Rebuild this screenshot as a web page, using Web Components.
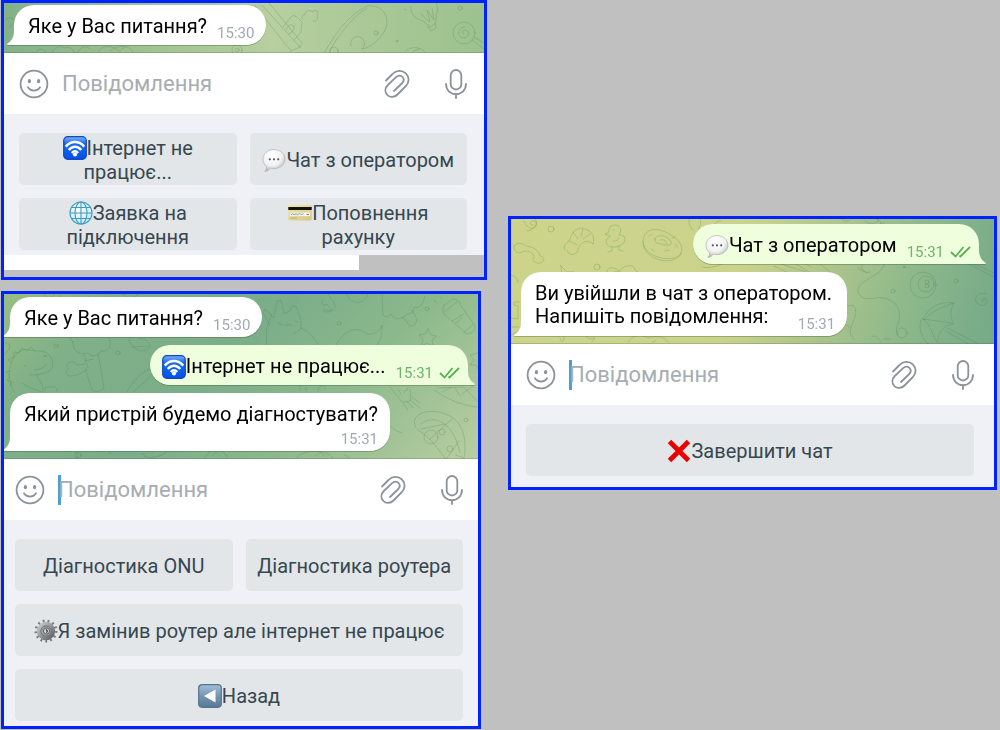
<!DOCTYPE html>
<html lang="uk">
<head>
<meta charset="utf-8">
<meta name="viewport" content="width=device-width, initial-scale=1">
<title>Чат-бот</title>
<style>
  * { box-sizing: border-box; }
  body {
    margin: 0;
    background: #c0c0c0;
    font-family: Roboto, "Noto Sans", sans-serif;
  }
  main {
    display: grid;
    grid-template-columns: 486fr 489fr;
    gap: 21px;
    align-items: start;
    padding: 0 3px 0 1px;
  }
  .column { display: flex; flex-direction: column; gap: 11px; }
  .operator { padding-top: 216px; }
  #questions { --inset-left: 15px; --inset-right: 17px; }
  #diagnostics { --inset-left: 11px; --inset-right: 15px; margin-right: 6px; }
  #chat { --inset-left: 15px; --inset-right: 20px; }
  #questions chat-wall {
    --wall: linear-gradient(90deg, #83b188 0%, #9fc190 28%, #b8cf9f 56%, #a9c896 76%, #9cc28e 100%);
    --wall-top: 2px;
  }
  #diagnostics chat-wall {
    --wall: linear-gradient(135deg, #9abe84 0%, #80b088 18%, #7bad89 45%, #8cb98c 68%, #b9cea2 100%);
    --wall-top: 3px;
  }
  #chat chat-wall {
    --wall: linear-gradient(105deg, #cdd48a 0%, #cbd38b 46%, #b2c68c 62%, #8fb98b 80%, #74a988 100%);
    --wall-top: 5px;
  }
  #questions reply-keyboard { --keys-bottom: 5px; }
  #diagnostics reply-keyboard { --keys-bottom: 5px; }
  #chat reply-keyboard { --keys-bottom: 11px; }
  .leftover { height: 22px; }
  .leftover div { width: 74%; height: 15px; background: #fff; }
</style>
</head>
<body>
<main>
  <div class="column">
    <chat-panel id="questions">
      <chat-wall>
        <svg slot="doodles" viewBox="4 3 480 50" preserveAspectRatio="xMinYMin slice" aria-hidden="true">
          <path d="M6 19c4-3 9-1 8 3-1 3-4 2-4 5"/>
          <path d="M36 52c2-4 8-4 10 0M52 53c2-6 8-8 13-5 4-2 9 1 9 5M78 52c3-6 8-7 12-3M98 52c4-7 12-6 17-4 8-3 14-2 18 4M110 51l4-3 5 3 6-4"/>
          <circle cx="237" cy="50" r="5"/><circle cx="237" cy="50" r="2"/>
          <path d="M262 5l38 42M255 6l36 45M300 47l2-4-33-40M291 51l9-4M283 27l8-10q2-3 6 0l5 5-1 10-7 8M302 19c-1-3 2-5 3-4 0-5 5-6 7-3 4-4 8 0 5 4 2 4-2 6-4 5M286 30q3-8 8-4 1 5-5 8"/>
          <path d="M325 52c10-19 26-40 45-47M329 52c9-16 21-33 38-44M370 6c16-1 22 17 12 29-6 8-13 13-20 14M351 46a7 7 0 1 1 11 3"/>
          <circle cx="376" cy="33" r="2"/><circle cx="397" cy="41" r="1"/><path d="M404 9l2 1M412 22v0"/>
          <path d="M411 6c-1 8 4 13 12 15l7 6 6-4V15c2-4 2-8 0-12M421 14l9 8-3-12 7 10-2-12M428 27l3 4 5-3-1-5"/>
          <circle cx="460" cy="8" r="2"/><circle cx="464" cy="33" r="11"/>
          <path d="M464 34c-2 0-2-4 1-4 5 0 5 7-1 8-7 0-8-11 1-11M474 37l10 6M472 40l12 9"/>
          <path d="M405 52c4-6 15-6 20 0M413 51l6-2"/>
          <circle cx="334" cy="51" r="4"/>
        </svg>
        <chat-bubble time="15:30">Яке у Вас питання?</chat-bubble>
      </chat-wall>
      <message-bar></message-bar>
      <reply-keyboard>
        <reply-key><emoji-icon name="wifi"></emoji-icon>Інтернет не працює...</reply-key>
        <reply-key><emoji-icon name="speech"></emoji-icon>Чат з оператором</reply-key>
        <reply-key><emoji-icon name="globe"></emoji-icon>Заявка на підключення</reply-key>
        <reply-key><emoji-icon name="card"></emoji-icon>Поповнення рахунку</reply-key>
      </reply-keyboard>
      <div class="leftover"><div></div></div>
    </chat-panel>

    <chat-panel id="diagnostics">
      <chat-wall>
        <svg slot="doodles" viewBox="4 294 474 165" preserveAspectRatio="xMinYMin slice" aria-hidden="true">
          <path d="M5 343c5-1 6 4 3 8l-4 4"/>
          <path d="M14 392c-5-9-7-21-2-31 3-8 10-13 17-11l9 1c11-1 17 9 14 17-3 5-13 7-22 7M22 383c7 5 13 7 21 9M43 390c0-9-6-10-6-15M45 391v-4h7q5-1 5 4"/>
          <path d="M12 363l-4-3 6-3 0-5 5 1 3-5 5 3 4-4 4 4M10 371l-4 1 4 4-3 4 5 2-2 4"/>
          <circle cx="45" cy="356" r="1"/><path d="M35 370q7 0 12-6M24 365l2 2"/>
          <circle cx="56" cy="346" r="2"/>
          <path d="M73 342c-7-6-3-13 3-12 2-7 11-6 13-3 8-5 17 1 16 8 9 3 6 18-4 16-2 6-10 6-13 2-8 3-16-2-15-11zM84 354l4 14M85 361l8-2M98 353l6 35q-6 6-12 2l-7-22"/>
          <path d="M85 364l-8 1c-5-7-13-1-9 4-5 5 2 9 6 6 4 1 6-2 13-5"/>
          <circle cx="118" cy="353" r="2"/>
          <path d="M129 340c3-6 10-5 11-1 6-1 10 4 10 8-6 6-15 6-21-7zM132 347l17-1"/>
          <path d="M127 392c7-14 17-21 28-26M133 392l20-18"/>
          <path d="M44 294c2 5 8 5 11 0M60 295c-2 4 4 7 7 4M88 296c4 5 10 6 16 1M121 293l9 6 8-4"/>
          <path d="M270 325l-7-12 2-4 9 9 3-17 4-1 3 14 7-4 1-4h4l5 14 0 9-8 5M272 314l-6 16M266 330c2 12-2 15 4 17M301 328c8 4 15 11 18 19M278 323l4 2M285 326l4-2 3 2M295 321l3 1"/>
          <circle cx="339" cy="323" r="2"/>
          <path d="M323 300c-3 4 1 7 4 4l5 6c-4 2-7-2-9 0 1 4 14 2 12-5-1-5-6-8-8-12M347 294c2 11 18 12 21 0"/>
          <path d="M382 295l1 20q5 4 8-1 4 8 13 3l3-3q7 0 7-7 6 2 9-5l2-6M403 317l7 9q6 0 7-7l-5-9"/>
          <circle cx="427" cy="309" r="2"/><path d="M434 300l3 3M440 297l2 2"/>
          <path d="M444 305l9-6q7 1 8 7l14 20q1 7-8 8l-22-19q-4-4-1-10zM444 312l13-10M452 321l12-7M463 333l11-9M456 323l6-5"/>
          <path d="M428 329l3 6 6 1-5 4 1 6-6-3-6 3 2-6-4-5 6-1z"/>
          <path d="M336 345c8-15 21-20 31-11 7 1 12-2 15-9 1 15-5 23-16 28M478 353l-8 2 4 5-4 5 6 0 2 4"/>
          <path d="M390 387l11 14q8 3 10-2l-1-9M398 389l3 5M404 393l4-5M407 401l6 7M410 400l10 8M403 403l5 7M412 397l8 6"/>
          <path d="M437 388l27-1 13 14M434 390c13 9 26 15 43 17M443 392l8-5M455 388l5 8"/>
          <path d="M416 428c-7-13 10-20 27-15 17 5 25 21 21 45l-8-3M417 429l13 10 16 20M421 424c12-10 32-4 39 29M421 429l24-5M430 439l22-20M447 458l12-17"/>
          <circle cx="431" cy="437" r="7"/><circle cx="442" cy="432" r="3"/><circle cx="450" cy="449" r="3"/><circle cx="466" cy="420" r="2"/>
          <path d="M75 459c4-2 4-7 0-6M110 454q-2-5 4-4M142 453c3 8 21 4 25-2M205 459c1-11 21-11 23 0M212 456c1-4 7-4 8 0M297 458c4-9 30-9 36 0M315 456l5-4 4 4M345 455l4 3M388 422q3 8 14 11"/>
          <circle cx="78" cy="455" r="3"/><path d="M300 390v-5q5-4 10 0M306 391v-3M318 391c0-7 7-6 7-2M462 394l11-8"/>
        </svg>
        <chat-bubble time="15:30">Яке у Вас питання?</chat-bubble>
        <chat-bubble time="15:31" out><emoji-icon name="wifi"></emoji-icon>Інтернет не працює...</chat-bubble>
        <chat-bubble time="15:31" meta="below">Який пристрій будемо діагностувати?</chat-bubble>
      </chat-wall>
      <message-bar focused></message-bar>
      <reply-keyboard>
        <reply-key>Діагностика ONU</reply-key>
        <reply-key>Діагностика роутера</reply-key>
        <reply-key wide><emoji-icon name="gear"></emoji-icon>Я замінив роутер але інтернет не працює</reply-key>
        <reply-key wide><emoji-icon name="back"></emoji-icon>Назад</reply-key>
      </reply-keyboard>
    </chat-panel>
  </div>

  <div class="column operator">
    <chat-panel id="chat">
      <chat-wall>
        <svg slot="doodles" viewBox="511 219 483 125" preserveAspectRatio="xMinYMin slice" aria-hidden="true">
          <path d="M524 221c2 6 8 10 12 5 2-4-3-7-5-4-2 2 1 4 2 3M527 231c8-1 12-9 8-12"/>
          <circle cx="551" cy="229" r="3"/><circle cx="597" cy="267" r="3"/>
          <path d="M514 246c3-4 9-3 12 0 8 1 13 5 14 10 6 1 4 7 0 7-5 1-9-3-6-7-2-5-7-6-12-4-3 3-9-1-8-6z"/>
          <path d="M565 250c-3-5 3-8 5-10 1-9 9-14 15-11 8 2 10 10 8 15-6-6-13-1-15 5 0 5-8 8-10 3l-1-2M573 232l5 7M583 229l-2 8M590 234l-7 5M569 241l8 4"/>
          <path d="M608 238c-5 4 0 10 7 9s12-5 9-11l-5-1c3-4 2-10-4-10-4 0-7 3-6 7l-4 2 5 2zM612 247v4l-4 1M619 246v4l4 1M613 230h1M619 238q-2 4-6 3"/>
          <path d="M643 242c0-11 9-15 20-11s22 13 18 22c-4 10-36 7-38-11zM643 244c3 19 35 22 38 9M655 239c2-5 10-4 14 0s2 7-3 6-12-1-11-6zM660 240q5-2 7 4M649 236l3-2M675 244l3 4M651 249l3 2M665 251l4-1M672 238l3-1"/>
          <path d="M689 219q-1 7 5 12M700 219q2 5-2 11M712 230c0-6 6-10 9-9M702 267c6 2 17-1 22-4M704 260l9-5"/>
          <path d="M560 265l7 7h7l-4 2M561 266l1 9M607 274c-1-8 7-8 12-3 6-7 16-7 16-1l7 5M612 273c6-3 10-1 14 2"/>
          <path d="M511 275q7 2 7 8M511 318l7 1 0-13-4-1v-3h6M512 327h7M511 335l8-4M560 338c1 6 5 4 4-2M586 336l3 3 6-1-3 4M628 342c5-8 14-8 20-4 9-3 18-1 21 5M652 343l4-3"/>
          <path d="M865 221c5 5 12 3 13-1M877 219l4 3-1 2 4-1M842 219q3 4 8 1"/>
          <path d="M774 266l17 8M781 264l25 8M794 263l15 9M804 263l7 4M820 264l10 8"/>
          <path d="M870 272a6 6 0 1 1 0-11c14-3 18 4 8 12-12 8-21 11-20 19 5 12 17 4 26 6 12 3 17 10 15 22-1 7-5 8-1 15M858 268q4 3 9 5"/>
          <circle cx="904" cy="267" r="1"/><circle cx="893" cy="291" r="2"/><circle cx="902" cy="333" r="5"/><circle cx="956" cy="281" r="2"/>
          <circle cx="923" cy="285" r="13"/><circle cx="926" cy="284" r="8"/><circle cx="927" cy="282" r="2"/><circle cx="927" cy="286" r="2"/>
          <path d="M965 262l29 15M970 262l24 11"/>
          <path d="M984 301c-4 2-2-4 1-3 5 3 0 9-5 7-9-4-3-15 7-11"/>
          <path d="M923 319c6-12 15-18 31-16-4 6-4 15 0 21-9 1-14 4-17 18-4-5-6-17-14-23M923 319l29 4M924 320c7-8 17-13 30-17M945 331l24 13M947 328l30 15M921 320c-3 10 1 18 7 24"/>
          <path d="M847 306c11-4 10 8 6 16-3 8-5 11 1 17M846 325q4 0 2 4M872 337c1-3 6 0 9 5M883 339l8 0"/>
        </svg>
        <chat-bubble time="15:31" out><emoji-icon name="speech"></emoji-icon>Чат з оператором</chat-bubble>
        <chat-bubble time="15:31" meta="corner">Ви увійшли в чат з оператором.<br>Напишіть повідомлення:</chat-bubble>
      </chat-wall>
      <message-bar focused></message-bar>
      <reply-keyboard>
        <reply-key wide><emoji-icon name="cross"></emoji-icon>Завершити чат</reply-key>
      </reply-keyboard>
    </chat-panel>
  </div>
</main>

<script>
const EMOJI = {
  wifi: `
    <defs><linearGradient id="g" x2="0" y2="1">
      <stop offset="0" stop-color="#7db2f7"/><stop offset=".3" stop-color="#1c6cf0"/><stop offset="1" stop-color="#0050ec"/>
    </linearGradient></defs>
    <rect x=".7" y=".7" width="22.6" height="22.6" rx="4" fill="url(#g)" stroke="#1647b4" stroke-width="1.2"/>
    <g fill="none" stroke="#fff" stroke-width="2.5">
      <path d="M2.8 10.6C8 4.6 16 4.6 21.2 10.6"/><path d="M5.8 14C9.4 9.8 14.6 9.8 18.2 14"/>
      <path d="M8.8 17C10.8 14.8 13.2 14.8 15.2 17"/>
    </g>
    <circle cx="12" cy="18.5" r="2.1" fill="#fff"/>`,
  speech: `
    <defs><radialGradient id="g" cx=".42" cy=".3" r=".75">
      <stop offset="0" stop-color="#fff"/><stop offset=".6" stop-color="#f1f1f1"/><stop offset="1" stop-color="#a9a9a9"/>
    </radialGradient></defs>
    <path d="M12 1.5C18 1.5 23 5.6 23 11s-5 9.6-11 9.6c-1.3 0-2.5-.2-3.6-.5C7.2 22 5 23.4 2.8 23.3c1.4-1.2 1.9-2.8 1.7-4.7C2.2 16.8 1 14.1 1 11c0-5.4 5-9.5 11-9.5z" fill="url(#g)" stroke="#aaa" stroke-width=".6"/>
    <g fill="#555"><circle cx="7.8" cy="11.3" r="1.1"/><circle cx="12" cy="11.3" r="1.1"/><circle cx="16.2" cy="11.3" r="1.1"/></g>`,
  globe: `
    <defs><radialGradient id="g" cx=".4" cy=".35" r=".7">
      <stop offset="0" stop-color="#fff"/><stop offset="1" stop-color="#c2e6f5"/>
    </radialGradient></defs>
    <circle cx="12" cy="12" r="11" fill="url(#g)"/>
    <g fill="none" stroke="#3d9bc4" stroke-width="1.1">
      <circle cx="12" cy="12" r="11"/><ellipse cx="12" cy="12" rx="6" ry="11"/>
      <path d="M12 1v22M1 12h22M3 6.5h18M3 17.5h18"/>
    </g>`,
  card: `
    <defs><linearGradient id="g" x2="1" y2="1">
      <stop offset="0" stop-color="#f3e7a4"/><stop offset="1" stop-color="#d5c583"/>
    </linearGradient></defs>
    <rect x=".3" y="4" width="23.4" height="15.5" rx="1.2" fill="url(#g)"/>
    <rect x=".3" y="6" width="23.4" height="3" fill="#111"/>
    <rect x="2" y="11.5" width="15" height="3.6" fill="#f4f1df"/>
    <path d="M3 13.8l1.5-1 1.5 1 2-1 1.5 1 2-1.3 2 1 2-.8" fill="none" stroke="#6b91cc" stroke-width=".8"/>
    <rect x="17" y="11.5" width="5" height="3.6" fill="#fff"/><path d="M18.5 13.4h2.5" stroke="#666"/>
    <path d="M2 17h7" stroke="#b4a566" stroke-width=".8"/>`,
  gear: `
    <defs><linearGradient id="g" x2="1" y2="1">
      <stop offset="0" stop-color="#c9cccd"/><stop offset="1" stop-color="#5d6162"/>
    </linearGradient></defs>
    <circle cx="12" cy="12" r="10" fill="none" stroke="#767b7d" stroke-width="3" stroke-dasharray="1.8 3.036"/>
    <circle cx="12" cy="12" r="7.2" fill="none" stroke="url(#g)" stroke-width="4"/>
    <circle cx="12" cy="12" r="5.2" fill="#989c9d" stroke="#666a6c" stroke-width=".8"/>
    <circle cx="12.5" cy="12" r="3" fill="#d6d8d8" stroke="#55595b" stroke-width=".9"/>
    <path d="M12 10.5l1.5 1.5-1 1.8" fill="none" stroke="#333" stroke-width="1.1"/>`,
  back: `
    <defs><linearGradient id="g" x2="0" y2="1">
      <stop offset="0" stop-color="#a3bdd6"/><stop offset=".5" stop-color="#7496b4"/><stop offset="1" stop-color="#587893"/>
    </linearGradient></defs>
    <rect x=".7" y=".7" width="22.6" height="22.6" rx="3.5" fill="url(#g)" stroke="#55748f" stroke-width="1.2"/>
    <path d="M6 12L17.5 5.5v13z" fill="#fff"/>`,
  cross: `<path d="M2.5 2.5l19 19M21.5 2.5l-19 19" stroke="#e90000" stroke-width="4.8" fill="none"/>`
};

class EmojiIcon extends HTMLElement {
  connectedCallback() {
    this.attachShadow({ mode: 'open' }).innerHTML = `
      <style>
        :host { display: inline-block; width: 24px; height: 23px; vertical-align: top; }
        svg { display: block; width: 100%; height: 24px; }
      </style>
      <svg viewBox="0 0 24 24" aria-hidden="true">${EMOJI[this.getAttribute('name')] || ''}</svg>`;
  }
}

class ChatPanel extends HTMLElement {
  connectedCallback() {
    this.attachShadow({ mode: 'open' }).innerHTML = `
      <style>
        :host { display: flex; flex-direction: column; border: 3px solid #0022ff; }
      </style>
      <slot></slot>`;
  }
}

class ChatWall extends HTMLElement {
  connectedCallback() {
    this.attachShadow({ mode: 'open' }).innerHTML = `
      <style>
        :host { display: block; position: relative; overflow: hidden; background: var(--wall); }
        .list {
          position: relative;
          display: flex;
          flex-direction: column;
          align-items: flex-start;
          gap: 8px;
          padding: var(--wall-top) calc(var(--inset-right) - 5px) 8px calc(var(--inset-left) - 5px);
          box-shadow: inset 0 -1px 0 rgba(50, 90, 50, 0.25);
        }
        ::slotted(svg) {
          position: absolute; inset: 0;
          width: 100%; height: 100%;
          fill: none;
          stroke: #3f7a4b;
          stroke-opacity: 0.24;
          stroke-width: 1;
          stroke-linecap: round;
          stroke-linejoin: round;
        }
      </style>
      <slot name="doodles"></slot>
      <div class="list"><slot></slot></div>`;
  }
}

class ChatBubble extends HTMLElement {
  connectedCallback() {
    const out = this.hasAttribute('out');
    const checks = `
      <svg class="checks" viewBox="0 0 21 12" aria-hidden="true">
        <path d="M1 6l4.5 4.5L13.5 1M9.5 9.5l1 1L20 1"/>
      </svg>`;

    this.attachShadow({ mode: 'open' }).innerHTML = `
      <style>
        :host {
          position: relative;
          display: flex;
          gap: 10px;
          min-height: 40px;
          padding: 10px 12px 3px 14px;
          border-radius: 20px 20px 20px 0;
          background: #fff;
          color: #000;
          font-size: 20px;
          line-height: 23px;
          filter: drop-shadow(0 1px 0 rgba(40, 70, 40, 0.3));
        }
        :host::before {
          content: '';
          position: absolute; left: -7px; bottom: 0;
          width: 8px; height: 15px;
          background: inherit;
          clip-path: path('M8 0H7C7 7 5 11 0 14Q0 15 1 15H8Z');
        }
        :host([out]) {
          align-self: flex-end;
          padding: 10px 8px 3px 12px;
          border-radius: 20px 20px 0 20px;
          background: #efffde;
        }
        :host([out])::before { left: auto; right: -7px; transform: scaleX(-1); }
        :host([meta=below]) { flex-direction: column; gap: 4px; }
        :host([meta=corner]) { display: grid; }
        :host([meta=corner]) .text { grid-area: 1 / 1; padding: 0 3px 5px 0; }
        :host([meta=corner]) .meta { grid-area: 1 / 1; justify-self: end; }
        .meta {
          display: flex;
          align-items: center;
          align-self: flex-end;
          gap: 6px;
          color: #a1aab3;
          font-size: 15px;
          line-height: 18px;
        }
        :host([out]) .meta { color: #6cb566; }
        .checks {
          width: 21px; height: 12px;
          fill: none; stroke: #5bb052; stroke-width: 1.8;
        }
      </style>
      <div class="text"><slot></slot></div>
      <div class="meta"><time>${this.getAttribute('time')}</time>${out ? checks : ''}</div>`;
  }
}

class MessageBar extends HTMLElement {
  connectedCallback() {
    this.attachShadow({ mode: 'open' }).innerHTML = `
      <style>
        :host {
          display: flex;
          align-items: center;
          height: 61px;
          padding: 0 var(--inset-right) 0 var(--inset-left);
          background: #fff;
        }
        button {
          flex: none;
          display: flex;
          border: 0; padding: 0;
          background: none;
          cursor: pointer;
        }
        svg { fill: none; stroke: #8b9298; stroke-width: 1.8; stroke-linecap: round; stroke-linejoin: round; }
        .eye { fill: #8b9298; stroke: none; }
        input {
          flex: 1; min-width: 0;
          height: 30px;
          margin: 0 12px 0 9px;
          border: 0; outline: 0;
          padding: 0 0 0 4px;
          background: none;
          font: 22px/30px Roboto, "Noto Sans", sans-serif;
          color: #000;
        }
        input::placeholder { color: #a5adb3; opacity: 1; }
        :host([focused]) input { background: linear-gradient(#4f9fd6, #4f9fd6) 4px 0 / 3px 100% no-repeat; }
        .mic { margin-left: 35px; }
      </style>
      <button type="button" aria-label="Емодзі">
        <svg width="30" height="30" viewBox="0 0 30 30">
          <circle cx="15" cy="15" r="13.4"/>
          <ellipse class="eye" cx="10.4" cy="12.2" rx="1.6" ry="2.1"/><ellipse class="eye" cx="19.6" cy="12.2" rx="1.6" ry="2.1"/>
          <path d="M9 18.3C11.5 22.6 18.5 22.6 21 18.3"/>
        </svg>
      </button>
      <input type="text" placeholder="Повідомлення" aria-label="Повідомлення">
      <button type="button" aria-label="Прикріпити файл">
        <svg width="26" height="30" viewBox="0 0 26 30">
          <path d="M2 11.5L8.5 5C12 1.3 18 .8 21.8 4.4C25.6 8.2 25.4 13.3 22 16.8L13.5 25.5C10.5 28.5 6 28.8 3.3 26C.5 23 .9 19 3.8 16L12.1 8.2C14.2 6.3 17 6.3 18.6 8C20.2 9.8 20 12 18.3 14L10 22"/>
        </svg>
      </button>
      <button class="mic" type="button" aria-label="Голосове повідомлення">
        <svg width="22" height="30" viewBox="0 0 22 30">
          <rect x="5.7" y="1" width="10.6" height="19.5" rx="5.3"/>
          <path d="M1 14.8C1 21 5.5 25.2 11 25.2S21 21 21 14.8M11 25.2V29"/>
        </svg>
      </button>`;
  }
}

class ReplyKeyboard extends HTMLElement {
  connectedCallback() {
    this.attachShadow({ mode: 'open' }).innerHTML = `
      <style>
        :host {
          display: grid;
          grid-template-columns: 1fr 1fr;
          gap: 13px;
          padding: 19px var(--inset-right) var(--keys-bottom) var(--inset-left);
          background: #f0f1f6;
        }
      </style>
      <slot></slot>`;
  }
}

class ReplyKey extends HTMLElement {
  connectedCallback() {
    this.attachShadow({ mode: 'open' }).innerHTML = `
      <style>
        :host { display: grid; }
        :host([wide]) { grid-column: 1 / -1; }
        button {
          min-height: 52px;
          border: 0; border-radius: 5px;
          padding: 3px 8px 1px;
          background: #e2e6e9;
          color: #37474f;
          font: 20px/24px Roboto, "Noto Sans", sans-serif;
          cursor: pointer;
        }
        button:hover { background: #dadfe3; }
      </style>
      <button type="button"><slot></slot></button>`;
  }
}

customElements.define('emoji-icon', EmojiIcon);
customElements.define('chat-panel', ChatPanel);
customElements.define('chat-wall', ChatWall);
customElements.define('chat-bubble', ChatBubble);
customElements.define('message-bar', MessageBar);
customElements.define('reply-keyboard', ReplyKeyboard);
customElements.define('reply-key', ReplyKey);
</script>
</body>
</html>
